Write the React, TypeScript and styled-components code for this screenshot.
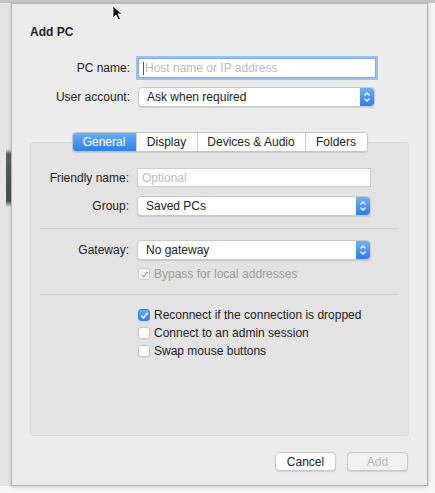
import React from 'react';
import styled, { createGlobalStyle } from 'styled-components';

const GlobalStyle = createGlobalStyle`
  html, body {
    margin: 0;
    padding: 0;
    background: #f6f6f6;
  }
  body {
    font-family: 'Liberation Sans', Arial, sans-serif;
    font-size: 12px;
    color: #222;
  }
`;

const Screen = styled.div`
  width: 435px;
  height: 493px;
  display: flex;
  flex-direction: column;
  overflow: hidden;
  position: relative;
`;

const TopBand = styled.div`
  height: 3px;
  background: #c4c4c4;
`;

const Middle = styled.div`
  display: flex;
  height: 483px;
`;

const LeftStrip = styled.div`
  width: 11px;
  background:
    linear-gradient(
        to bottom,
        transparent 146px,
        #55605c 151px,
        #474c4a 198px,
        transparent 204px
      )
      right top / 5px 100% no-repeat,
    #e5e5e5;
`;

const RightStrip = styled.div`
  flex: 1;
  background: linear-gradient(to right, #d8d8d8 0, #f2f2f2 2px, #f7f7f7 100%);
`;

const Window = styled.div`
  width: 417px;
  box-sizing: border-box;
  border: 1px solid #b4b4b4;
  background: #ececec;
  box-shadow: 0 1px 3px rgba(0, 0, 0, 0.2);
  display: flex;
  flex-direction: column;
`;

const Title = styled.div`
  margin: 21px 0 0 18px;
  font-weight: bold;
  font-size: 12px;
  line-height: 14px;
`;

const TopForm = styled.div`
  margin-top: 19px;
  display: flex;
  flex-direction: column;
  gap: 9px;
`;

const Row = styled.div<{ $label: number; $control: number }>`
  display: grid;
  grid-template-columns: ${(p) => p.$label}px ${(p) => p.$control}px;
  column-gap: 8px;
  align-items: center;
`;

const Label = styled.span`
  text-align: right;
  white-space: nowrap;
`;

const TextInput = styled.div<{ $focused?: boolean; $h?: number }>`
  height: ${(p) => p.$h ?? 19}px;
  box-sizing: border-box;
  background: #fff;
  border: 1px solid ${(p) => (p.$focused ? '#7fa9e0' : '#cdcdcd')};
  box-shadow: ${(p) => (p.$focused ? '0 0 0 2px #9fc1ef' : 'none')};
  display: flex;
  align-items: center;
  padding-left: 4px;
  color: #bcbcbc;
  font-size: 12px;
`;

const Caret = styled.span`
  width: 1px;
  height: 13px;
  background: #555;
  margin-right: 1px;
`;

const Popup = styled.div`
  height: 20px;
  box-sizing: border-box;
  background: #fff;
  border: 1px solid #c9c9c9;
  border-radius: 4px;
  box-shadow: 0 1px 1px rgba(0, 0, 0, 0.12);
  display: flex;
  align-items: center;
  justify-content: space-between;
  padding-left: 8px;
  color: #222;
  overflow: hidden;
`;

const Stepper = styled.div`
  width: 14px;
  height: 18px;
  border-radius: 0 3px 3px 0;
  background: linear-gradient(to bottom, #6eb0f7, #2f7de9);
  display: flex;
  align-items: center;
  justify-content: center;
`;

const TabArea = styled.div`
  margin: 25px 18px 0 18px;
  display: flex;
  flex-direction: column;
  align-items: center;
`;

const Tabs = styled.div`
  display: flex;
  height: 18px;
  border: 1px solid #c4c4c4;
  border-radius: 4px;
  background: #fff;
  margin-bottom: -10px;
  position: relative;
  z-index: 1;
  box-shadow: 0 1px 1px rgba(0, 0, 0, 0.1);
  overflow: hidden;
`;

const Tab = styled.div<{ $active?: boolean; $w: number }>`
  width: ${(p) => p.$w}px;
  display: flex;
  align-items: center;
  justify-content: center;
  font-size: 12px;
  color: ${(p) => (p.$active ? '#fff' : '#222')};
  background: ${(p) => (p.$active ? 'linear-gradient(to bottom, #6aaef7, #2d7fea)' : '#fff')};
  & + & {
    border-left: 1px solid #d0d0d0;
  }
`;

const Panel = styled.div`
  align-self: stretch;
  height: 294px;
  box-sizing: border-box;
  background: #e3e3e3;
  border: 1px solid #dadada;
  border-radius: 3px;
  padding-top: 25px;
  display: flex;
  flex-direction: column;
`;

const Group = styled.div<{ $top?: number }>`
  margin-top: ${(p) => p.$top ?? 0}px;
  display: flex;
  flex-direction: column;
  gap: 9px;
`;

const Separator = styled.div<{ $top: number }>`
  height: 1px;
  background: #cfcfcf;
  margin: ${(p) => p.$top}px 10px 0 9px;
`;

const CheckList = styled.div<{ $top: number }>`
  margin-top: ${(p) => p.$top}px;
  padding-left: 107px;
  display: flex;
  flex-direction: column;
`;

const CheckRow = styled.div<{ $disabled?: boolean }>`
  height: 18px;
  display: flex;
  align-items: center;
  gap: 4px;
  color: ${(p) => (p.$disabled ? '#9b9b9b' : '#222')};
`;

const Box = styled.span<{ $checked?: boolean; $disabled?: boolean }>`
  width: 12px;
  height: 12px;
  box-sizing: border-box;
  border-radius: 3px;
  border: 1px solid ${(p) => (p.$checked && !p.$disabled ? '#2f7de9' : '#c3c3c3')};
  background: ${(p) =>
    p.$checked && !p.$disabled ? 'linear-gradient(to bottom, #6aaef7, #2d7fea)' : '#fff'};
  display: flex;
  align-items: center;
  justify-content: center;
  opacity: ${(p) => (p.$disabled ? 0.7 : 1)};
`;

const Footer = styled.div`
  margin-top: 16px;
  display: flex;
  justify-content: flex-end;
  gap: 11px;
  padding-right: 19px;
`;

const Button = styled.div<{ $disabled?: boolean }>`
  width: 61px;
  height: 19px;
  box-sizing: border-box;
  border: 1px solid #c8c8c8;
  border-radius: 4px;
  background: ${(p) => (p.$disabled ? '#f1f1f1' : '#fff')};
  box-shadow: 0 1px 1px rgba(0, 0, 0, 0.12);
  display: flex;
  align-items: center;
  justify-content: center;
  color: ${(p) => (p.$disabled ? '#b9b9b9' : '#222')};
`;

const Cursor = styled.svg`
  position: absolute;
  left: 112px;
  top: 5px;
`;

const StepperIcon = () => (
  <svg width="8" height="12" viewBox="0 0 8 12">
    <path d="M1.5 4.5 L4 2 L6.5 4.5" fill="none" stroke="#fff" strokeWidth="1.3" />
    <path d="M1.5 7.5 L4 10 L6.5 7.5" fill="none" stroke="#fff" strokeWidth="1.3" />
  </svg>
);

const Check = ({ color }: { color: string }) => (
  <svg width="9" height="9" viewBox="0 0 9 9">
    <path d="M1.5 4.8 L3.6 7 L7.5 1.8" fill="none" stroke={color} strokeWidth="1.5" />
  </svg>
);

const PopupField = ({ value }: { value: string }) => (
  <Popup>
    <span>{value}</span>
    <Stepper>
      <StepperIcon />
    </Stepper>
  </Popup>
);

const options = [
  { label: 'Reconnect if the connection is dropped', checked: true },
  { label: 'Connect to an admin session', checked: false },
  { label: 'Swap mouse buttons', checked: false },
];

export default function App() {
  return (
    <Screen>
      <GlobalStyle />
      <TopBand />
      <Middle>
        <LeftStrip />
        <Window>
          <Title>Add PC</Title>
          <TopForm>
            <Row $label={118} $control={238}>
              <Label>PC name:</Label>
              <TextInput $focused $h={20}>
                <Caret />
                Host name or IP address
              </TextInput>
            </Row>
            <Row $label={118} $control={237}>
              <Label>User account:</Label>
              <PopupField value="Ask when required" />
            </Row>
          </TopForm>
          <TabArea>
            <Tabs>
              <Tab $active $w={63}>General</Tab>
              <Tab $w={60}>Display</Tab>
              <Tab $w={107}>Devices &amp; Audio</Tab>
              <Tab $w={61}>Folders</Tab>
            </Tabs>
            <Panel>
              <Group>
                <Row $label={98} $control={234}>
                  <Label>Friendly name:</Label>
                  <TextInput>Optional</TextInput>
                </Row>
                <Row $label={98} $control={234}>
                  <Label>Group:</Label>
                  <PopupField value="Saved PCs" />
                </Row>
              </Group>
              <Separator $top={12} />
              <Group $top={11}>
                <Row $label={98} $control={234}>
                  <Label>Gateway:</Label>
                  <PopupField value="No gateway" />
                </Row>
              </Group>
              <CheckList $top={5}>
                <CheckRow $disabled>
                  <Box $checked $disabled>
                    <Check color="#aaa" />
                  </Box>
                  Bypass for local addresses
                </CheckRow>
              </CheckList>
              <Separator $top={11} />
              <CheckList $top={11}>
                {options.map((o) => (
                  <CheckRow key={o.label}>
                    <Box $checked={o.checked}>{o.checked && <Check color="#fff" />}</Box>
                    {o.label}
                  </CheckRow>
                ))}
              </CheckList>
            </Panel>
          </TabArea>
          <Footer>
            <Button>Cancel</Button>
            <Button $disabled>Add</Button>
          </Footer>
        </Window>
        <RightStrip />
      </Middle>
      <Cursor width="12" height="16" viewBox="0 0 12 16">
        <path d="M1 1 L1 13 L4 10 L6.5 15 L8.5 14 L6 9 L10 9 Z" fill="#111" stroke="#fff" strokeWidth="0.8" />
      </Cursor>
    </Screen>
  );
}
